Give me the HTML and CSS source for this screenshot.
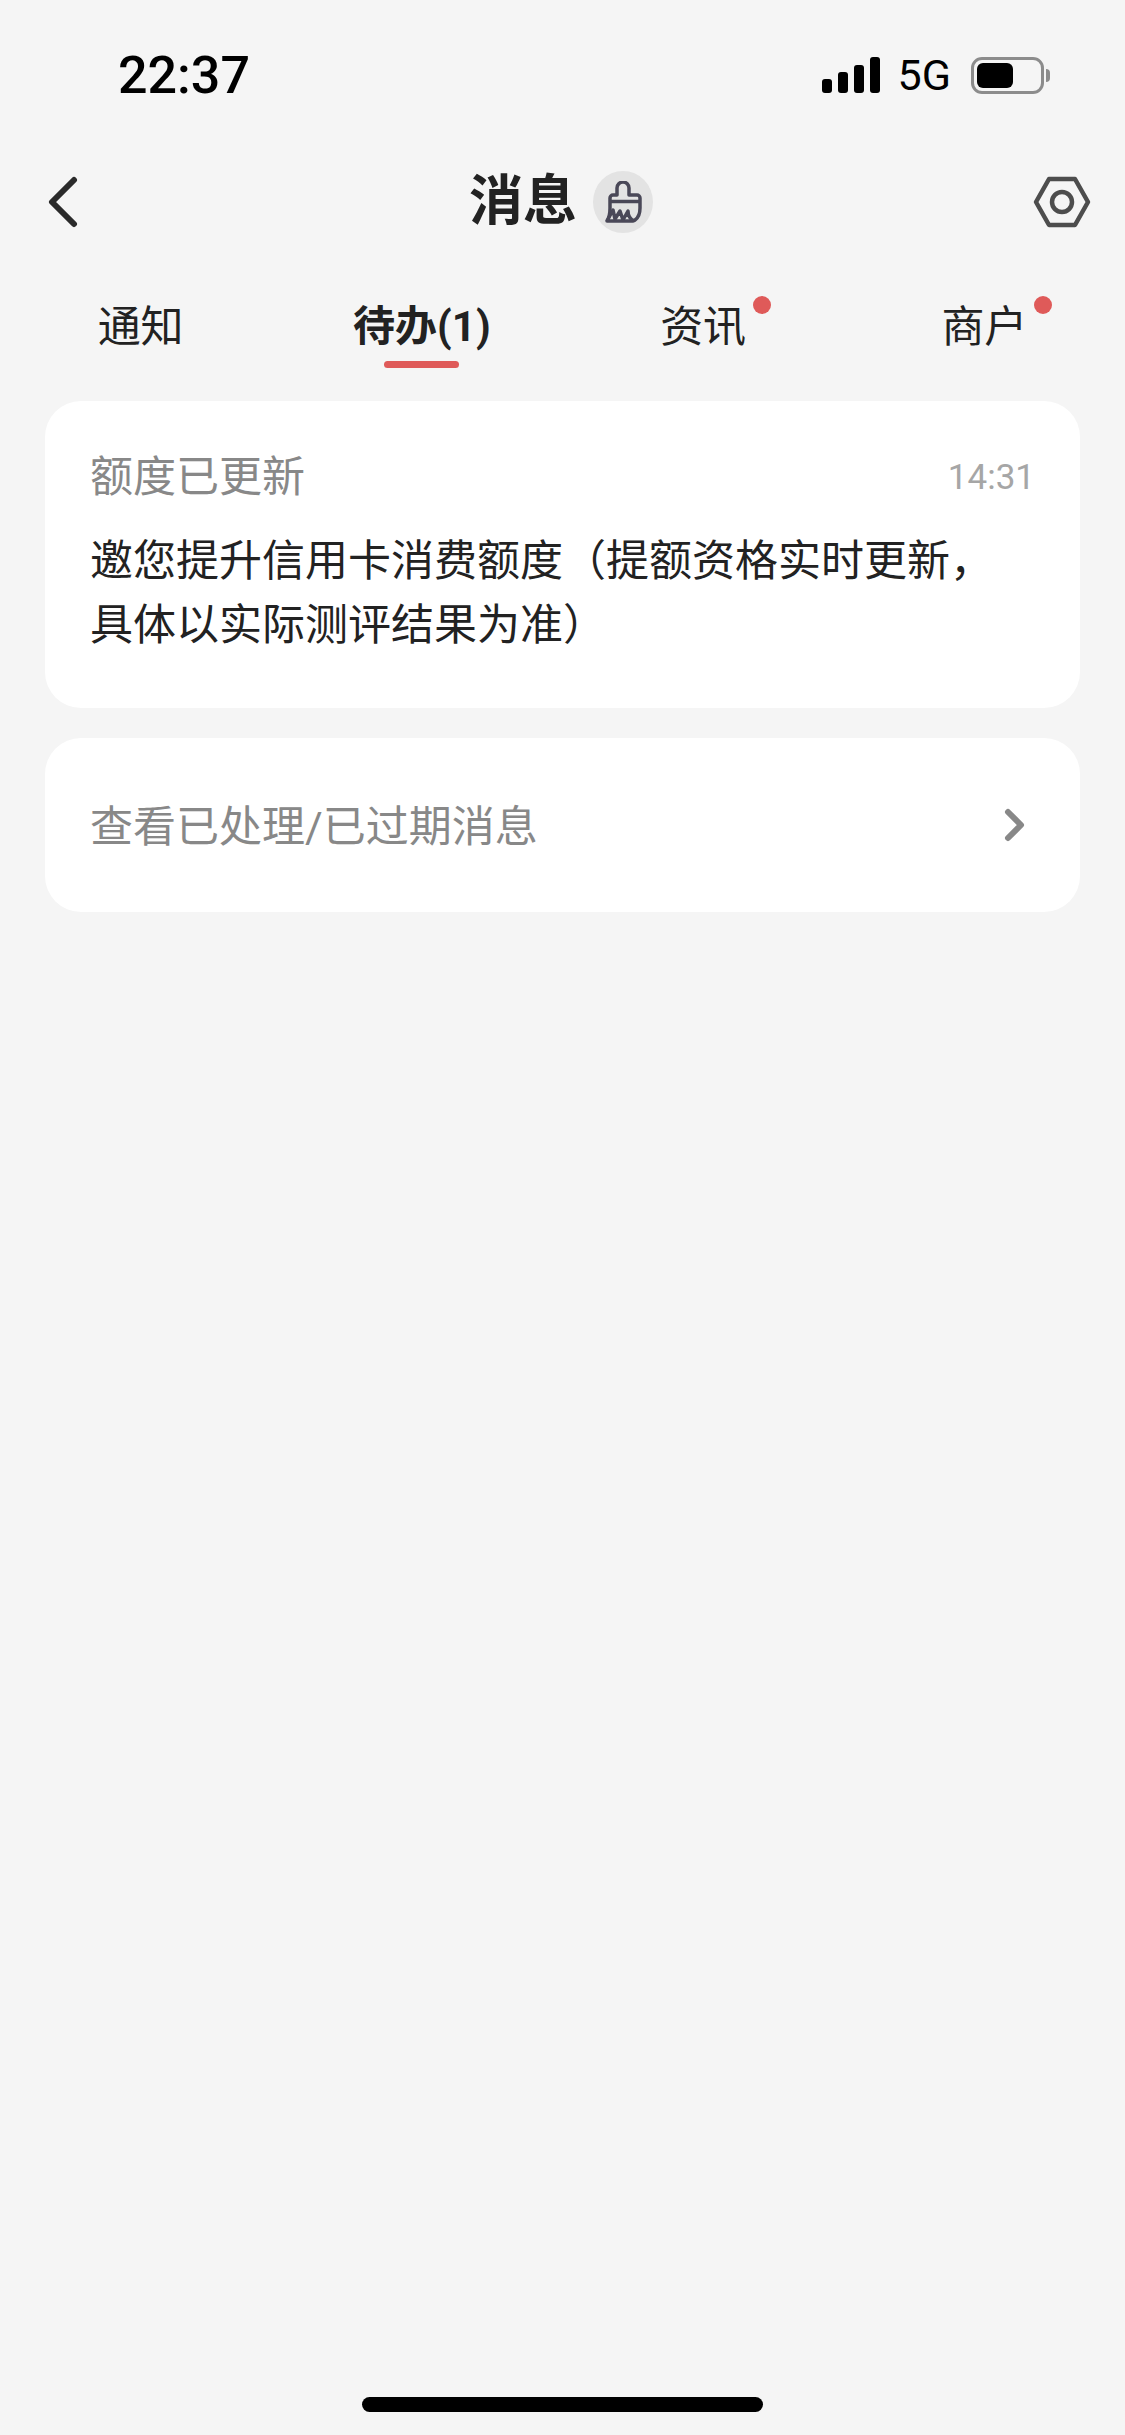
FILE: index.html
```html
<!DOCTYPE html>
<html lang="zh-CN">
<head>
  <meta charset="UTF-8" />
  <meta name="viewport" content="width=device-width, initial-scale=1.0"/>
  <title>消息</title>
  <link rel="stylesheet" href="styles.css">
</head>
<body>
  <div class="page">
    <div class="status-bar">
      <div class="clock">22:37</div>
      <div class="status-right">
        <div class="signal">
          <span class="bar bar-1"></span>
          <span class="bar bar-2"></span>
          <span class="bar bar-3"></span>
          <span class="bar bar-4"></span>
        </div>
        <div class="network">5G</div>
        <div class="battery">
          <div class="battery-body"><div class="battery-level"></div></div>
          <div class="battery-nub"></div>
        </div>
      </div>
    </div>

    <div class="nav">
      <svg class="back-icon" viewBox="0 0 30 52">
        <path d="M26 4L4 26l22 22"/>
      </svg>
      <div class="nav-title">
        <h1>消息</h1>
        <div class="clean-btn">
          <svg viewBox="0 0 38 42">
            <path d="M13 14V7a6 6 0 0 1 12 0v7h8a3 3 0 0 1 3 3v10c0 6-2 10-5 12-1 1-3 1-5 1H3c2-3 3-7 3-13V17a3 3 0 0 1 3-3z"/>
            <path d="M6 20.500h30"/>
            <path d="M3 40l6-11 2 9 5-8 3 9 5-9c0 4 2 8 6 10"/>
          </svg>
        </div>
      </div>
      <svg class="settings-icon" viewBox="0 0 58 52">
        <path d="M16 3h26l13 23-13 23H16L3 26z"/>
        <circle cx="29" cy="26" r="10"/>
      </svg>
    </div>

    <div class="tabs">
      <div class="tab"><span class="tab-label">通知</span></div>
      <div class="tab active"><span class="tab-label">待办(1)</span></div>
      <div class="tab"><span class="tab-label has-dot">资讯</span></div>
      <div class="tab"><span class="tab-label has-dot">商户</span></div>
    </div>

    <div class="list">
      <div class="card message">
        <div class="message-head">
          <div class="message-title">额度已更新</div>
          <div class="message-time">14:31</div>
        </div>
        <div class="message-body">邀您提升信用卡消费额度（提额资格实时更新，具体以实际测评结果为准）</div>
      </div>
      <div class="card history">
        <div class="history-text">查看已处理/已过期消息</div>
        <svg class="arrow-icon" viewBox="0 0 22 34">
          <path d="M4 4l13 13L4 30"/>
        </svg>
      </div>
    </div>

    <div class="home-bar"></div>
  </div>
</body>
</html>
```

FILE: styles.css
```css
* {
  box-sizing: border-box;
}

body {
  margin: 0;
  background-color: #f5f5f5;
  color: #222;
  font-family: Roboto, "Noto Sans CJK SC", sans-serif;
}

.page {
  height: 2435px;
  display: flex;
  flex-direction: column;
  overflow: hidden;
}

/* Status bar */
.status-bar {
  height: 150px;
  padding: 0 75px 0 118px;
  display: flex;
  justify-content: space-between;
  align-items: center;
  color: #000;
}

.clock {
  font-size: 52px;
  font-weight: 500;
}

.status-right {
  display: flex;
  align-items: center;
}

.signal {
  display: flex;
  align-items: flex-end;
  gap: 6px;
  height: 36px;
  margin-right: 18px;
}

.bar {
  width: 10px;
  background: #000;
  border-radius: 3px;
}

.bar-1 { height: 14px; }
.bar-2 { height: 21px; }
.bar-3 { height: 28px; }
.bar-4 { height: 36px; }

.network {
  font-size: 43px;
  margin-right: 20px;
}

.battery {
  display: flex;
  align-items: center;
  gap: 2px;
}

.battery-body {
  width: 73px;
  height: 37px;
  border: 3px solid #8c8c8c;
  border-radius: 11px;
  padding: 3px;
}

.battery-level {
  width: 36px;
  height: 100%;
  background: #000;
  border-radius: 6px;
}

.battery-nub {
  width: 4px;
  height: 13px;
  background: #8c8c8c;
  border-radius: 0 4px 4px 0;
}

/* Nav */
.nav {
  position: relative;
  height: 104px;
  padding: 0 34px 0 48px;
  display: flex;
  justify-content: space-between;
  align-items: center;
}

.back-icon {
  width: 30px;
  height: 52px;
  fill: none;
  stroke: #2a2a2a;
  stroke-width: 6;
  stroke-linecap: round;
  stroke-linejoin: round;
}

.nav-title {
  display: flex;
  align-items: center;
  gap: 16px;
  position: absolute;
  left: 469px;
  top: 21px;
}

.nav-title h1 {
  margin: 0;
  font-size: 54px;
  font-weight: 700;
  line-height: 62px;
}

.clean-btn {
  width: 60px;
  height: 62px;
  border-radius: 50%;
  background: #e3e3e3;
  display: flex;
  align-items: center;
  justify-content: center;
}

.clean-btn svg {
  width: 38px;
  height: 42px;
  fill: none;
  stroke: #4a4858;
  stroke-width: 3.5;
  stroke-linejoin: round;
}

.settings-icon {
  width: 58px;
  height: 52px;
  fill: none;
  stroke: #4d4d4d;
  stroke-width: 4.5;
  stroke-linejoin: round;
}

/* Tabs */
.tabs {
  display: grid;
  grid-template-columns: repeat(4, 1fr);
  margin-top: 42px;
}

.tab {
  position: relative;
  display: flex;
  justify-content: center;
  padding-bottom: 20px;
}

.tab-label {
  position: relative;
  font-size: 43px;
  line-height: 62px;
}

.tab.active .tab-label {
  font-weight: 700;
  font-size: 42px;
}

.tab.active::after {
  content: '';
  position: absolute;
  left: 50%;
  bottom: 10px;
  width: 75px;
  height: 7px;
  margin-left: -38px;
  background: #df5a59;
  border-radius: 4px;
}

.has-dot::after {
  content: '';
  position: absolute;
  right: -25px;
  top: 0;
  width: 18px;
  height: 18px;
  background: #df5a59;
  border-radius: 50%;
}

/* Cards */
.list {
  display: flex;
  flex-direction: column;
  gap: 30px;
  margin-top: 23px;
  padding: 0 45px;
}

.card {
  background: #fff;
  border-radius: 36px;
}

.message {
  height: 307px;
  padding: 48px 45px 0;
}

.message-head {
  display: flex;
  justify-content: space-between;
  align-items: center;
  margin-bottom: 24px;
}

.message-title {
  font-size: 43px;
  line-height: 56px;
  color: #888;
}

.message-time {
  font-size: 35px;
  color: #a6a6a6;
}

.message-body {
  font-size: 43px;
  line-height: 64px;
  color: #222;
}

.history {
  height: 174px;
  padding: 0 54px 0 45px;
  display: flex;
  justify-content: space-between;
  align-items: center;
}

.history-text {
  font-size: 43px;
  color: #888;
  padding-bottom: 5px;
}

.arrow-icon {
  width: 22px;
  height: 34px;
  fill: none;
  stroke: #888;
  stroke-width: 6;
  stroke-linejoin: round;
  stroke-linecap: round;
}

.home-bar {
  width: 401px;
  height: 15px;
  margin: auto auto 23px;
  background: #000;
  border-radius: 8px;
}
```
